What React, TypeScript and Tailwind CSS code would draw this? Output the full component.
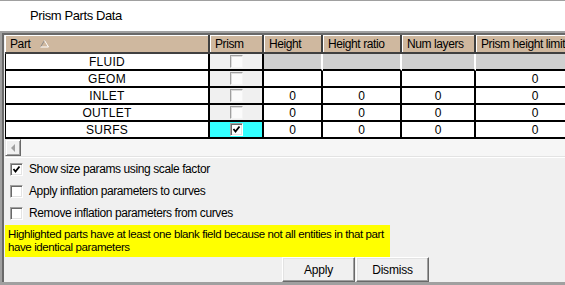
import React from "react";

const cols = [
  { label: "Part", w: "w-[205px]" },
  { label: "Prism", w: "w-[54px]" },
  { label: "Height", w: "w-[59px]" },
  { label: "Height ratio", w: "w-[79px]" },
  { label: "Num layers", w: "w-[74px]" },
  { label: "Prism height limit factor", w: "w-[120px]" },
];

const rows = [
  { name: "FLUID", checked: false, values: ["", "", "", ""], gray: true },
  { name: "GEOM", checked: false, values: ["", "", "", "0"], gray: false },
  { name: "INLET", checked: false, values: ["0", "0", "0", "0"], gray: false },
  { name: "OUTLET", checked: false, values: ["0", "0", "0", "0"], gray: false },
  { name: "SURFS", checked: true, values: ["0", "0", "0", "0"], gray: false },
];

function Check() {
  return (
    <svg width="9" height="9" viewBox="0 0 9 9" className="block">
      <polyline points="1.5,4 3.5,6.5 7.5,1.5" fill="none" stroke="#000" strokeWidth="1.8" />
    </svg>
  );
}

function Checkbox({ checked, muted }: { checked?: boolean; muted?: boolean }) {
  return (
    <div
      className={`w-[13px] h-[13px] flex items-center justify-center border ${
        muted
          ? "border-t-[#a0a0a0] border-l-[#a0a0a0] border-b-[#f4f4f4] border-r-[#f4f4f4] bg-[#fbfbfb] shadow-[inset_1px_1px_0_#dcdcdc]"
          : "border-t-[#a0a0a0] border-l-[#a0a0a0] border-b-white border-r-white bg-white shadow-[inset_1px_1px_0_#696969,inset_-1px_-1px_0_#e3e3e3]"
      }`}
    >
      {checked && <Check />}
    </div>
  );
}

function SortArrow() {
  return (
    <svg width="9" height="8" viewBox="0 0 9 8" className="block">
      <line x1="4.5" y1="0.5" x2="0.5" y2="7" stroke="#8a8a8a" strokeWidth="1" />
      <line x1="4.5" y1="0.5" x2="8.5" y2="7" stroke="#fff" strokeWidth="1" />
      <line x1="0.5" y1="7" x2="8.5" y2="7" stroke="#fff" strokeWidth="1" />
    </svg>
  );
}

function Button({ label }: { label: string }) {
  return (
    <button className="w-[73px] h-[25px] bg-[#f0f0f0] border border-t-white border-l-white border-b-[#696969] border-r-[#696969] shadow-[inset_-1px_-1px_0_#a0a0a0,inset_1px_1px_0_#e3e3e3] text-[12px] tracking-[-0.2px] text-black">
      {label}
    </button>
  );
}

export default function App() {
  return (
    <div className="w-[565px] h-[285px] overflow-hidden bg-[#f0f0f0] font-['Liberation_Sans',Arial,sans-serif] text-black flex flex-col">
      {/* Title */}
      <div className="h-[31px] shrink-0 bg-white border-t border-[#a0a0a0] flex items-center pl-[30px] text-[13px] tracking-[-0.4px]">
        Prism Parts Data
      </div>

      {/* Frame */}
      <div className="flex-1 border-l-2 border-t-2 border-[#a0a0a0] border-b-[3px] border-b-[#a0a0a0]">
        <div className="h-full border-l-2 border-t-2 border-[#696969] pl-px flex flex-col">
          {/* Header */}
          <div className="flex h-[19px] shrink-0 bg-[#cfb89f] border-b-2 border-[#404040] whitespace-nowrap overflow-hidden">
            {cols.map((c, i) => (
              <div
                key={c.label}
                className={`${c.w} shrink-0 h-full flex items-center gap-[10px] pl-[5px] text-[12px] tracking-[-0.4px] border-r-2 border-r-[#404040] shadow-[inset_1px_1px_0_#fff] overflow-hidden`}
              >
                <span>{c.label}</span>
                {i === 0 && <SortArrow />}
              </div>
            ))}
          </div>

          {/* Rows */}
          {rows.map((r) => (
            <div key={r.name} className="flex h-[17px] shrink-0 whitespace-nowrap border-l border-black">
              <div className="w-[204px] shrink-0 bg-white border-r-2 border-b-2 border-black flex items-center justify-center text-[12px] tracking-[0.3px]">
                {r.name}
              </div>
              <div
                className={`w-[54px] shrink-0 border-r-2 border-b-2 border-black flex items-center justify-center ${
                  r.checked ? "bg-[#33ffff]" : "bg-[#f0f0f0]"
                }`}
              >
                <Checkbox checked={r.checked} muted={!r.checked} />
              </div>
              {r.values.map((v, j) => (
                <div
                  key={j}
                  className={`${cols[j + 2].w} shrink-0 border-b-2 border-black flex items-center justify-center text-[12px] ${
                    r.gray ? "bg-[#d0d0d0] border-r-2 border-r-white" : "bg-white border-r-2"
                  }`}
                >
                  {v}
                </div>
              ))}
            </div>
          ))}

          {/* Horizontal scrollbar */}
          <div className="flex h-[17px] shrink-0 bg-[#f6f6f6]">
            <div className="w-[16px] h-full bg-[#f0f0f0] border border-t-[#e3e3e3] border-l-[#e3e3e3] border-b-[#696969] border-r-[#696969] shadow-[inset_1px_1px_0_#fff,inset_-1px_-1px_0_#a0a0a0] flex items-center justify-center">
              <div className="w-0 h-0 border-y-[4px] border-y-transparent border-r-[4px] border-r-[#a0a0a0]" />
            </div>
          </div>
          <div className="h-[2px] shrink-0 border-t border-[#e3e3e3] bg-white" />

          {/* Options */}
          <div className="flex flex-col pl-[5px] text-[12px] tracking-[-0.4px]">
            {[
              { label: "Show size params using scale factor", checked: true },
              { label: "Apply inflation parameters to curves", checked: false },
              { label: "Remove inflation parameters from curves", checked: false },
            ].map((o) => (
              <div key={o.label} className="h-[22px] flex items-center gap-[6px]">
                <Checkbox checked={o.checked} />
                <span>{o.label}</span>
              </div>
            ))}
          </div>

          {/* Note */}
          <div className="mt-px w-[385px] h-[32px] shrink-0 bg-[#ffff00] px-[3px] pt-[3px] text-[11.5px] leading-[13px] tracking-[-0.4px] whitespace-nowrap">
            Highlighted parts have at least one blank field because not all entities in that part
            <br />
            have identical parameters
          </div>

          {/* Buttons */}
          <div className="flex gap-px pl-[277px]">
            <Button label="Apply" />
            <Button label="Dismiss" />
          </div>
        </div>
      </div>
    </div>
  );
}
